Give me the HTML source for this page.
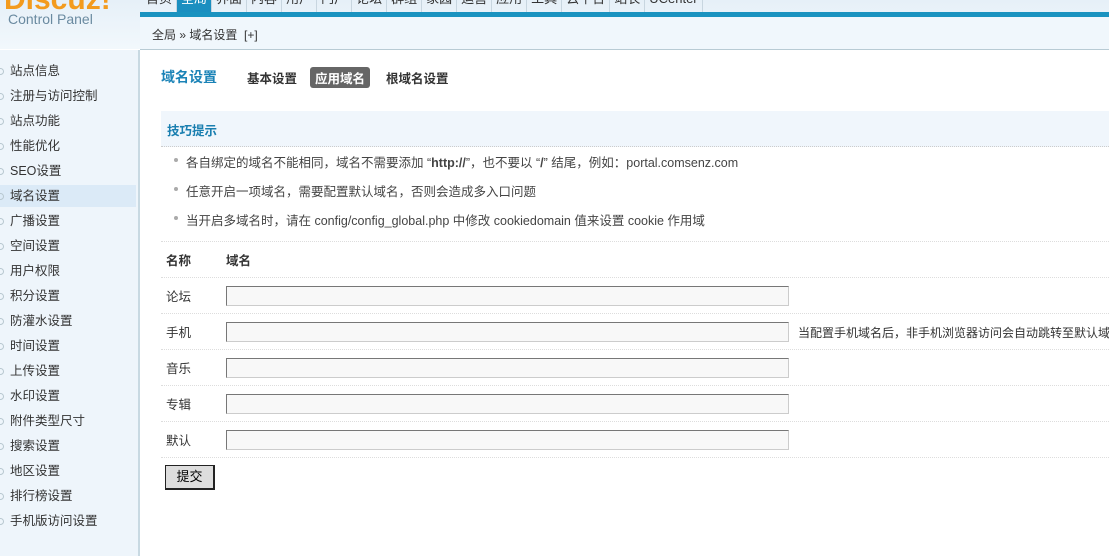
<!DOCTYPE html>
<html><head><meta charset="utf-8"><style>
*{margin:0;padding:0;box-sizing:border-box}
body{width:1109px;height:556px;overflow:hidden;background:#fff;font-family:"Liberation Sans","Noto Sans CJK SC",sans-serif;font-size:12px;color:#333;position:relative}
.hdr{position:absolute;left:0;top:0;width:1109px;height:49px;background:linear-gradient(#e6f0f8,#f2f8fc)}
.logo{position:absolute;left:4px;top:-17px;font:bold 30px "Liberation Sans",sans-serif;color:#f39b1e}
.cp{position:absolute;left:8px;top:11px;font-size:14px;color:#6a8aa0}
.nav{position:absolute;left:142px;top:-9px;height:21px;display:flex}
.nav span{padding:0 4px;height:21px;line-height:16px;font-size:13px;color:#333;border-right:1px solid #c8d6e0}
.nav span.on{background:#1b8fc0;color:#fff}
.bar{position:absolute;left:140px;top:12px;right:0;height:5px;background:#1a93c0}
.crumb{position:absolute;left:140px;top:17px;right:0;height:33px;background:#f0f7fc;border-bottom:1px solid #b8cbd4;padding:9px 12px;font-size:12px;color:#333}
.side{position:absolute;left:0;top:50px;width:140px;height:506px;background:#eef5fb;border-right:2px solid #c8d9e2}
.side div{position:absolute;left:0;width:136px;height:22px;line-height:22px;padding-left:10px;font-size:12.5px;color:#333}
.side div:before{content:"";position:absolute;left:-3px;top:8px;width:5px;height:5px;border:1px solid #b8c8d0;border-radius:50%}
.side div.on{background:#dbeaf7}
.main{position:absolute;left:161px;top:50px;right:0}
.t{position:absolute;top:17px;font-size:14px;font-weight:bold;color:#1b83b7}
.tab{position:absolute;top:18px;font-size:12.5px;font-weight:bold;color:#333}
.tab.on{background:#666;color:#fff;border-radius:3px;padding:1px 5px;top:17px}
.tip{position:absolute;left:0;right:0;top:61px;height:36px;background:#f0f6fc;border-bottom:1px dotted #ccc;padding:9px 6px;font-weight:bold;color:#1a7fb0;font-size:12.5px}
.li{position:absolute;left:25px;font-size:12.5px;color:#444}
.li:before{content:"";position:absolute;left:-12px;top:6px;width:4px;height:4px;background:#aaa;border-radius:50%}
.row{position:absolute;left:0;right:0;height:36px;border-top:1px dotted #ddd}
.row .l{position:absolute;left:5px;top:8px;font-size:12.5px;color:#333}
.inp{position:absolute;left:65px;top:8px;width:563px;height:20px;background:#f8f8f8;border:1px solid #ccc;border-top-color:#777;border-left-color:#777}
.btn{position:absolute;left:4px;top:415px;width:50px;height:25px;background:#ddd;border:1px solid #222;border-right-width:2px;border-bottom-width:2px;font-size:13px;text-align:center;line-height:22px;color:#000}
</style></head><body>
<div class="hdr"><div class="logo">Discuz!</div><div class="cp">Control Panel</div></div>
<div class="nav"><span>首页</span><span class="on">全局</span><span>界面</span><span>内容</span><span>用户</span><span>门户</span><span>论坛</span><span>群组</span><span>家园</span><span>运营</span><span>应用</span><span>工具</span><span>云平台</span><span>站长</span><span>UCenter</span></div>
<div class="bar"></div>
<div class="crumb">全局 » 域名设置 &nbsp;[+]</div>
<div class="side">
<div style="top:10px">站点信息</div><div style="top:35px">注册与访问控制</div><div style="top:60px">站点功能</div><div style="top:85px">性能优化</div><div style="top:110px">SEO设置</div><div class="on" style="top:135px">域名设置</div><div style="top:160px">广播设置</div><div style="top:185px">空间设置</div><div style="top:210px">用户权限</div><div style="top:235px">积分设置</div><div style="top:260px">防灌水设置</div><div style="top:285px">时间设置</div><div style="top:310px">上传设置</div><div style="top:335px">水印设置</div><div style="top:360px">附件类型尺寸</div><div style="top:385px">搜索设置</div><div style="top:410px">地区设置</div><div style="top:435px">排行榜设置</div><div style="top:460px">手机版访问设置</div>
</div>
<div class="main">
<div class="t">域名设置</div>
<div class="tab" style="left:86px">基本设置</div>
<div class="tab on" style="left:149px">应用域名</div>
<div class="tab" style="left:225px">根域名设置</div>
<div class="tip">技巧提示</div>
<div class="li" style="top:102px">各自绑定的域名不能相同，域名不需要添加 “<b>http://</b>”，也不要以 “<b>/</b>” 结尾，例如：portal.comsenz.com</div>
<div class="li" style="top:131px">任意开启一项域名，需要配置默认域名，否则会造成多入口问题</div>
<div class="li" style="top:160px">当开启多域名时，请在 config/config_global.php 中修改 cookiedomain 值来设置 cookie 作用域</div>
<div class="row" style="top:191px"><span class="l" style="font-weight:bold">名称</span><span class="l" style="left:65px;font-weight:bold">域名</span></div>
<div class="row" style="top:227px"><span class="l">论坛</span><div class="inp"></div></div>
<div class="row" style="top:263px"><span class="l">手机</span><div class="inp"></div><span class="l" style="left:637px;white-space:nowrap;font-size:12px;top:10px">当配置手机域名后，非手机浏览器访问会自动跳转至默认域名</span></div>
<div class="row" style="top:299px"><span class="l">音乐</span><div class="inp"></div></div>
<div class="row" style="top:335px"><span class="l">专辑</span><div class="inp"></div></div>
<div class="row" style="top:371px"><span class="l">默认</span><div class="inp"></div></div>
<div class="row" style="top:407px;height:1px"></div>
<div class="btn">提交</div>
</div>
</body></html>
